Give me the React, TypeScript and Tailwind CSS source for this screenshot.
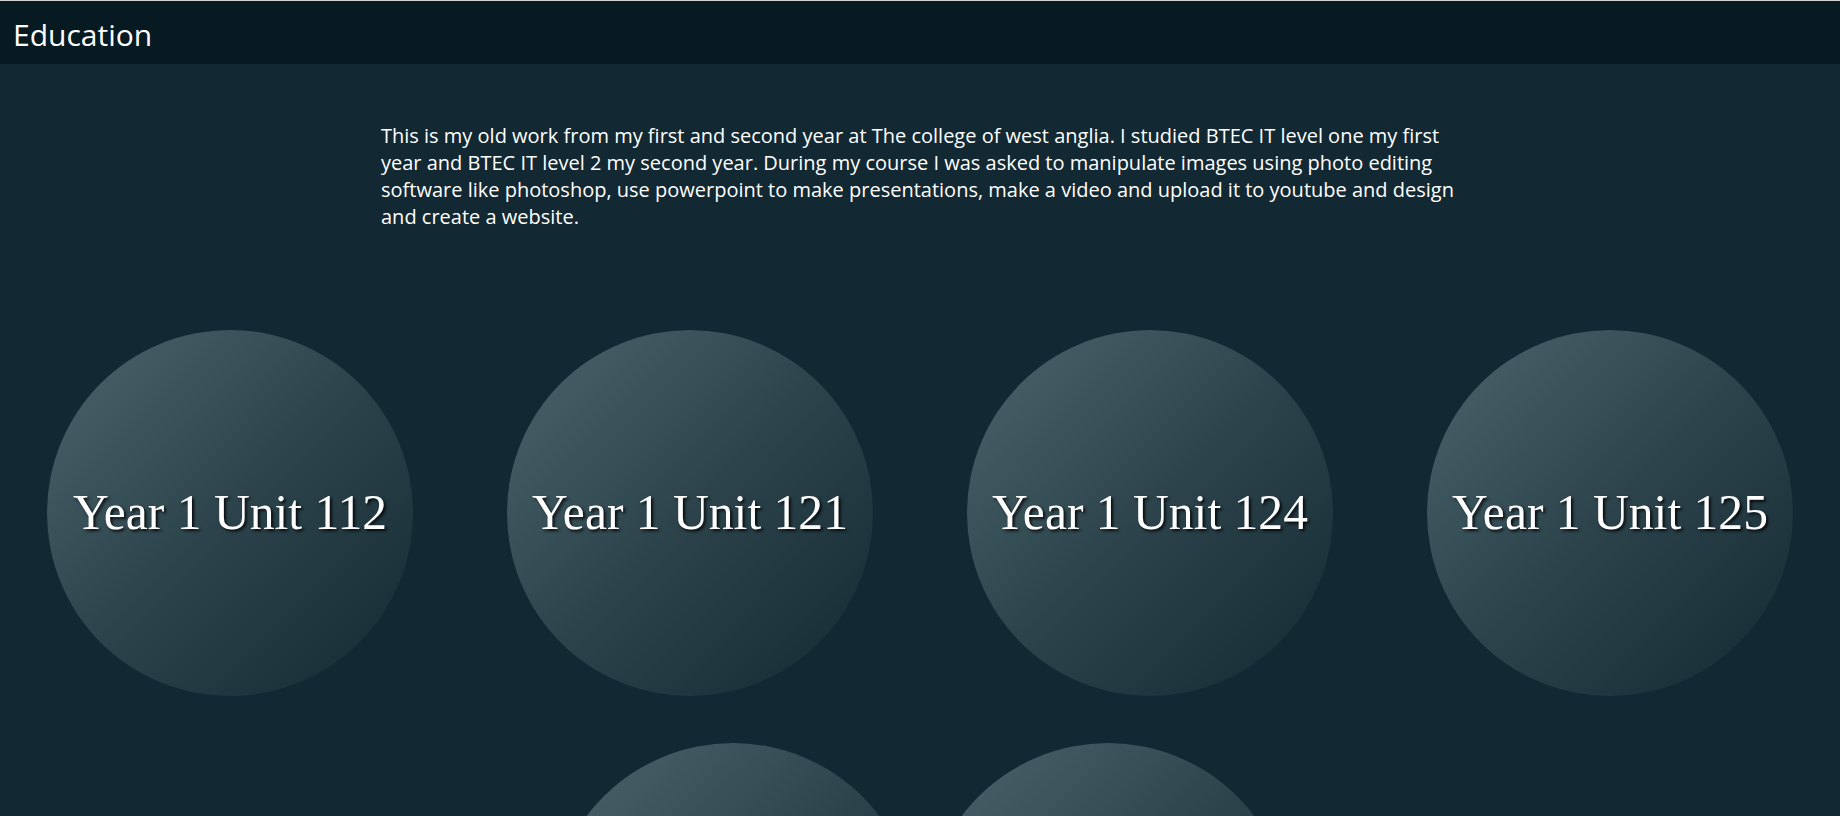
const units = ["Year 1 Unit 112", "Year 1 Unit 121", "Year 1 Unit 124", "Year 1 Unit 125"];
const more = ["Year 2 Unit 1", "Year 2 Unit 2"];

function Circle({ label }: { label: string }) {
  return (
    <div className="w-[366px] h-[366px] rounded-full bg-linear-to-br from-[#4c666e] via-[#2c434b] to-[#132a33] flex items-center justify-center shrink-0">
      <span className="text-[49.6px] leading-none text-white font-['Liberation_Serif',serif] whitespace-nowrap [text-shadow:2px_2px_3px_rgba(0,0,0,0.85)]">
        {label}
      </span>
    </div>
  );
}

export default function App() {
  return (
    <div className="min-h-[816px] bg-[#122832] font-['Open_Sans',sans-serif] text-white overflow-hidden">
      <header className="h-[64px] border-t border-[#d0d0d0] bg-[#071a21] flex items-center pt-[4px] px-[13px]">
        <h1 className="text-[30px] leading-none">Education</h1>
      </header>

      <p className="mt-[58px] ml-[381px] w-[1080px] text-[20px] leading-[27px]">
        This is my old work from my first and second year at The college of west anglia. I studied BTEC IT level one my first year and BTEC IT level 2 my second year. During my course I was asked to manipulate images using photo editing software like photoshop, use powerpoint to make presentations, make a video and upload it to youtube and design and create a website.
      </p>

      <div className="mt-[100px] flex justify-around">
        {units.map((u) => (
          <Circle key={u} label={u} />
        ))}
      </div>

      <div className="mt-[47px] flex justify-center gap-[9px]">
        {more.map((u) => (
          <Circle key={u} label={u} />
        ))}
      </div>
    </div>
  );
}
